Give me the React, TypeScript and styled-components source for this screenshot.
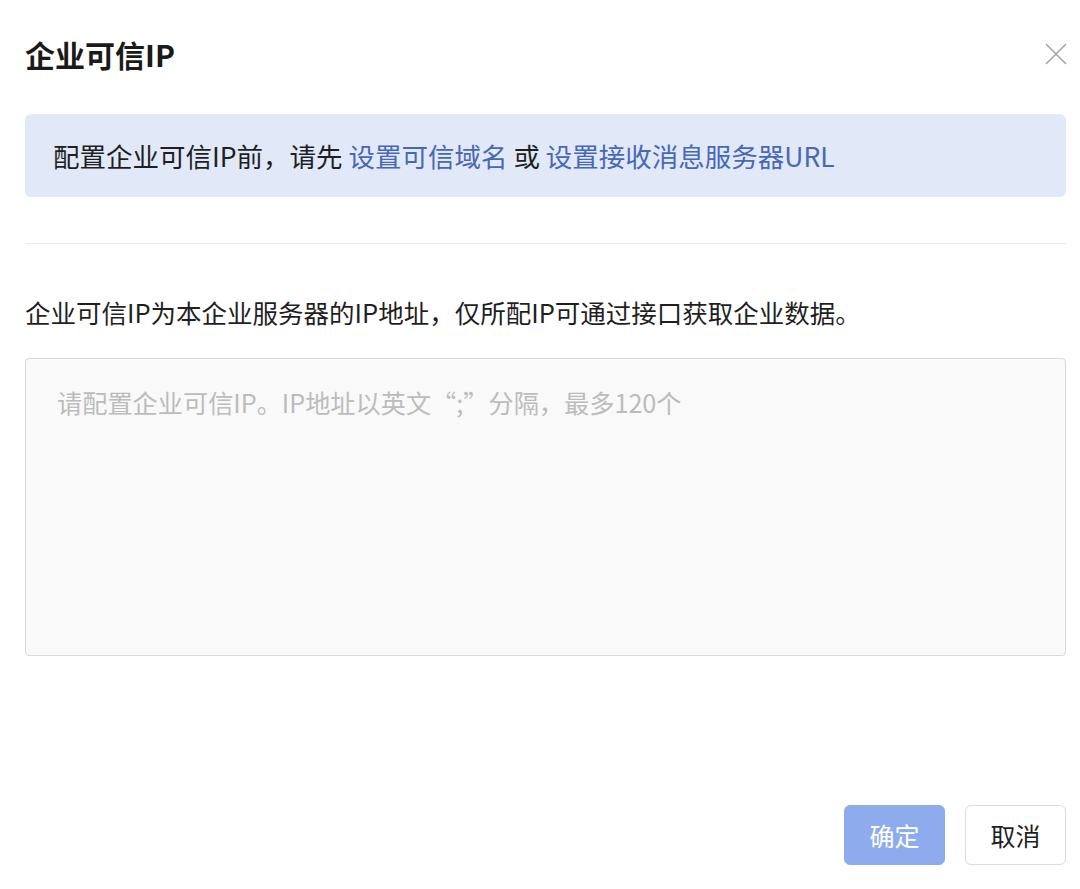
import React from "react";
import styled, { createGlobalStyle } from "styled-components";

const GlobalStyle = createGlobalStyle`
  html, body {
    margin: 0;
    padding: 0;
    background: #ffffff;
  }
  body {
    font-family: "Noto Sans CJK SC", "Noto Sans", sans-serif;
    color: #1f1f1f;
  }
  * {
    box-sizing: border-box;
  }
`;

const Dialog = styled.div`
  display: flex;
  flex-direction: column;
  width: 1080px;
  height: 889px;
  padding: 34px 14px 0 25px;
`;

const Header = styled.div`
  display: flex;
  align-items: center;
  justify-content: space-between;
  height: 40px;
`;

const Title = styled.h1`
  margin: 0;
  font-size: 30px;
  line-height: 40px;
  font-weight: 700;
  color: #1a1a1a;
`;

const CloseButton = styled.button`
  display: flex;
  align-items: center;
  justify-content: center;
  width: 22px;
  height: 22px;
  padding: 0;
  margin-right: -1px;
  border: none;
  background: transparent;
  cursor: pointer;
`;

const Notice = styled.div`
  display: flex;
  align-items: center;
  height: 83px;
  margin-top: 40px;
  padding: 0 28px;
  border-radius: 6px;
  background: #e1e9f9;
  font-size: 26.5px;
  line-height: 36px;
  color: #1f1f1f;
  white-space: pre;
`;

const NoticeLink = styled.a`
  color: #4867b4;
  text-decoration: none;
  cursor: pointer;
`;

const Divider = styled.hr`
  margin: 46px 0 0;
  border: none;
  border-top: 1px solid #ececec;
`;

const Description = styled.p`
  margin: 50px 0 0;
  font-size: 25.5px;
  line-height: 36px;
  color: #1f1f1f;
`;

const IpInput = styled.textarea`
  display: block;
  width: 100%;
  height: 298px;
  margin-top: 28px;
  padding: 25px 31px;
  border: 1px solid #d9d9d9;
  border-radius: 4px;
  background: #f9f9f9;
  font-family: inherit;
  font-size: 25.2px;
  line-height: 36px;
  color: #1f1f1f;
  resize: none;
  outline: none;

  &::placeholder {
    color: #bcbcbc;
  }
`;

const Footer = styled.div`
  display: flex;
  justify-content: flex-end;
  gap: 20px;
  margin-top: 149px;
`;

const Button = styled.button<{ $primary?: boolean }>`
  width: 101px;
  height: 60px;
  padding: 0;
  border-radius: 6px;
  font-family: inherit;
  font-size: 25px;
  border: 1px solid ${(p) => (p.$primary ? "#8eabee" : "#dcdcdc")};
  background: ${(p) => (p.$primary ? "#8eabee" : "#ffffff")};
  color: ${(p) => (p.$primary ? "#ffffff" : "#1f1f1f")};
  cursor: ${(p) => (p.$primary ? "not-allowed" : "pointer")};
`;

const CloseIcon = () => (
  <svg width="22" height="22" viewBox="0 0 22 22" fill="none">
    <path
      d="M1.5 1.5L20.5 20.5M20.5 1.5L1.5 20.5"
      stroke="#a3a3a3"
      strokeWidth="1.5"
      strokeLinecap="round"
    />
  </svg>
);

export default function App() {
  return (
    <>
      <GlobalStyle />
      <Dialog>
        <Header>
          <Title>企业可信IP</Title>
          <CloseButton aria-label="关闭">
            <CloseIcon />
          </CloseButton>
        </Header>
        <Notice>
          配置企业可信IP前，请先 <NoticeLink>设置可信域名</NoticeLink> 或{" "}
          <NoticeLink>设置接收消息服务器URL</NoticeLink>
        </Notice>
        <Divider />
        <Description>
          企业可信IP为本企业服务器的IP地址，仅所配IP可通过接口获取企业数据。
        </Description>
        <IpInput placeholder="请配置企业可信IP。IP地址以英文“;”分隔，最多120个" />
        <Footer>
          <Button $primary disabled>
            确定
          </Button>
          <Button>取消</Button>
        </Footer>
      </Dialog>
    </>
  );
}
